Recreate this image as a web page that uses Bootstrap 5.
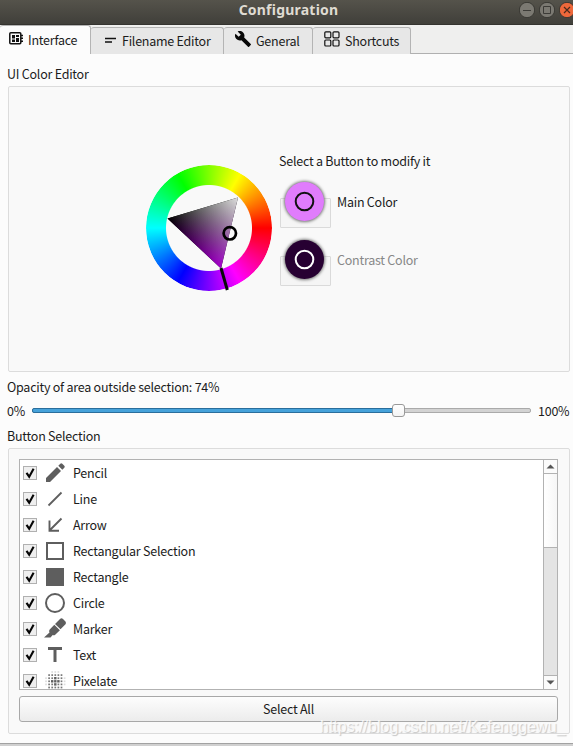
<!DOCTYPE html>
<html lang="en">
<head>
<meta charset="utf-8">
<title>Configuration</title>
<meta name="viewport" content="width=device-width, initial-scale=1">
<link href="https://cdn.jsdelivr.net/npm/bootstrap@5.3.0/dist/css/bootstrap.min.css" rel="stylesheet">
<style>
body{font-family:"Noto Sans CJK SC",sans-serif;font-size:12.5px;letter-spacing:-.24px;line-height:20px;color:#1c1c1c;background:#fcfcfc;height:746px;overflow:hidden}
.titlebar{height:25px;background:linear-gradient(#55534b,#403f3a);border-bottom:1px solid #34332f}
.titlebar h1{font:700 14px/20px "Noto Sans",sans-serif;letter-spacing:.22px;color:#dfdbd2;padding-left:4px}
.win-btns{top:2px;right:-2px;gap:4px}
.tabs{height:29px;background:#efefee;border-bottom:1px solid #b0b0b0}
.tab-item{height:27px;margin-top:2px;background:#e7e7e7;border:1px solid #b4b4b4;border-left-width:0;border-bottom:0;border-radius:3px 3px 0 0;white-space:nowrap}
.tab-item.current{height:29px;margin-top:0;background:#fcfcfc}
.tab-interface{width:91px}
.tab-filename{width:133px}
.tab-general{width:89px}
.tab-shortcuts{width:98px}
.tab-text{padding-left:5px}
.tab-interface svg{margin-top:-3px}
.tab-interface .tab-text{padding-left:4px}
.tab-filename svg{margin-left:13px;margin-top:-3px}
.tab-filename .tab-text{padding-left:6px}
.tab-general svg,.tab-shortcuts svg{margin-left:11px;margin-top:-4px}
.pane{padding:10px 3px 0 7px}
.group{border:1px solid #dcdcdc;border-radius:2px;background:#f9f9f9;margin-left:1px}
.editor{height:286px;margin-top:2px}
.wheel{width:126px;height:126px;margin:78px 0 0 137px}
.ring{width:126px;height:126px;border-radius:50%;background:conic-gradient(from 90deg,red,#f0f,#00f,#0ff,#0f0,#ff0,red);-webkit-mask:radial-gradient(circle,transparent 42.5px,#000 43.5px);mask:radial-gradient(circle,transparent 42.5px,#000 43.5px)}
.wheel svg{left:0;top:0;isolation:isolate}
.blend{mix-blend-mode:screen}
.picker{margin:64px 0 0 7px}
.pick-row{height:46px;margin-top:10px}
.pick-row.second{margin-top:12px}
.pick-label{margin:11px 0 0 6px}
.dimmed{color:#888}
.swatch-box{width:51px;height:30px;border:1px solid #dadada;border-radius:1px;background:#f5f5f5;margin:17px 0 0 1px}
.swatch{width:39px;height:39px;left:4px;top:-17px;border-radius:50%;box-shadow:0 0 3px 1px #777}
.swatch.main-color{background:#e07cfc}
.swatch.contrast-color{background:#270032}
.opacity-label{margin-top:5px}
.slider-row{margin-top:4px}
.zero{width:25px}
.hundred{width:32px;margin-left:7px}
.sel-label{margin-top:5px}
.slider{height:5px;margin-bottom:2px;background:#d3d3d3;border:1px solid #aaa;border-radius:2px}
.slider-fill{height:5px;top:-1px;left:-1px;background:#46a2da;border:1px solid #2a6e9c;border-radius:2px 0 0 2px}
.knob{width:13px;height:13px;top:-5px;background:linear-gradient(#fff,#f4f4f4);border:1px solid #999;border-radius:3px}
.selection{height:286px;padding:10px 11px 0 10px;margin-top:2px}
.tool-list{height:231px;border:1px solid #b2b2b2;background:#fff}
.tool{height:26px}
.tool-name{margin-left:4px}
.tick{width:14px;height:14px;border:1px solid #b0b0b0;background:#efefef;margin-left:3px}
.tool-icon{width:28px;margin-left:4px}
.scroll{width:14px;border-left:1px solid #b2b2b2;background:#e4e4e4}
.arrow-btn{height:13px;background:#fbfbfb}
.arrow-btn.down{height:14px;border-top:1px solid #b2b2b2}
.thumb{height:75px;background:linear-gradient(90deg,#fff,#f6f6f6);border-top:1px solid #b2b2b2;border-bottom:1px solid #b2b2b2}
.select-all{height:26px;margin-top:6px;padding:0;font-size:12.5px;letter-spacing:-.24px;line-height:24px;color:#1c1c1c;background:linear-gradient(#fdfdfd,#ececec);border:1px solid #a8a8a8;border-radius:3px}
.watermark{left:320px;top:717px;font:16px/20px "Liberation Sans",sans-serif;letter-spacing:0;color:rgba(255,255,255,.8);text-shadow:1px 1px 1px #c4c4c4;white-space:nowrap}
.win-edge{height:3px;border-top:1px solid #a2a2a2;background:#d0d0d0;margin-top:9px}
</style>
<script src="https://cdn.jsdelivr.net/npm/bootstrap@5.3.0/dist/js/bootstrap.bundle.min.js"></script>
</head>
<body>
<header class="titlebar position-relative text-center">
  <h1 class="m-0">Configuration</h1>
  <div class="win-btns position-absolute d-flex">
    <svg width="16" height="16"><circle cx="8" cy="8" r="7.7" fill="#7b7972" stroke="#393833"/><path d="M4 8.5h8" stroke="#3c3b37"/></svg>
    <svg width="16" height="16"><circle cx="8" cy="8" r="7.7" fill="#7b7972" stroke="#393833"/><path d="M4.5 4.5h7v7h-7z" fill="none" stroke="#3c3b37"/></svg>
    <svg width="16" height="16"><circle cx="8" cy="8" r="7.7" fill="#ee683b" stroke="#393833"/><path d="M5 5l6 6M11 5l-6 6" stroke="#4a2a1c" stroke-width="1.2"/></svg>
  </div>
</header>

<nav class="tabs d-flex">
  <div class="tab-item current tab-interface d-flex align-items-center">
    <svg class="ms-2" width="16" height="16" viewBox="0 0 16 16"><rect x="1.8" y="1.8" width="11" height="11" rx="1" fill="none" stroke="#111" stroke-width="1.5"/><path d="M13 4.5h2M13 7.3h2M13 10.2h2" stroke="#111" stroke-width="1.4"/><path d="M4 4h3v3.500H4zM8 4h3v2H8zM4 8.500h3V11H4zM8 7h3v4H8z" fill="#111"/></svg>
    <span class="tab-text">Interface</span>
  </div>
  <div class="tab-item tab-filename d-flex align-items-center">
    <svg width="12" height="8"><path d="M1 2.500h11M1 6h7" stroke="#111" stroke-width="1.7"/></svg>
    <span class="tab-text">Filename Editor</span>
  </div>
  <div class="tab-item tab-general d-flex align-items-center">
    <svg width="16" height="16" viewBox="1 1 22 22"><path d="M22.700 19l-9.100-9.100c.9-2.300.4-5-1.500-6.900-2-2-5-2.400-7.400-1.300L9 6 6 9 1.600 4.700C.4 7.100.9 10.100 2.900 12.100c1.900 1.900 4.600 2.400 6.900 1.500l9.100 9.100c.4.400 1 .4 1.400 0l2.300-2.300c.5-.4.5-1.100.1-1.400z" fill="#080808"/></svg>
    <span class="tab-text">General</span>
  </div>
  <div class="tab-item tab-shortcuts d-flex align-items-center">
    <svg width="16" height="16" fill="none" stroke="#111" stroke-width="1.2"><rect x=".8" y=".8" width="6" height="6" rx="1"/><rect x="9" y=".8" width="6" height="6" rx="1"/><rect x=".8" y="9" width="6" height="6" rx="1"/><rect x="9" y="9" width="6" height="6" rx="1"/></svg>
    <span class="tab-text">Shortcuts</span>
  </div>
</nav>

<main class="pane">
  <div>UI Color Editor</div>
  <section class="group editor d-flex">
    <div class="wheel position-relative">
      <div class="ring"></div>
      <svg class="position-absolute" width="126" height="128" viewBox="146 165 126 128">
        <defs>
          <linearGradient id="lightness" gradientUnits="userSpaceOnUse" x1="194.8" y1="243.3" x2="238" y2="197.5"><stop stop-color="#000"/><stop offset="1" stop-color="#dedede"/></linearGradient>
          <linearGradient id="purple" gradientUnits="userSpaceOnUse" x1="203.3" y1="207.7" x2="221" y2="268"><stop stop-color="#000"/><stop offset="1" stop-color="#a800d0"/></linearGradient>
        </defs>
        <path d="M167.500 218.500L238 197.500 221 268.500z" fill="url(#lightness)"/>
        <path class="blend" d="M167.500 218.500L238 197.500 221 268.500z" fill="url(#purple)"/>
        <path d="M221 268l6.300 22" stroke="#080808" stroke-width="3"/>
        <circle cx="229.8" cy="233.3" r="6.2" fill="none" stroke="#000" stroke-width="2.7"/>
      </svg>
    </div>
    <div class="picker">
      <div>Select a Button to modify it</div>
      <div class="pick-row d-flex">
        <div class="swatch-box position-relative flex-shrink-0"><div class="swatch main-color position-absolute"><svg width="39" height="39" class="d-block"><circle cx="19.5" cy="19.5" r="8.8" fill="none" stroke="#111" stroke-width="2"/></svg></div></div>
        <span class="pick-label">Main Color</span>
      </div>
      <div class="pick-row second d-flex">
        <div class="swatch-box position-relative flex-shrink-0"><div class="swatch contrast-color position-absolute"><svg width="39" height="39" class="d-block"><circle cx="19.5" cy="19.5" r="8.8" fill="none" stroke="#fff" stroke-width="2"/></svg></div></div>
        <span class="pick-label dimmed">Contrast Color</span>
      </div>
    </div>
  </section>

  <div class="opacity-label">Opacity of area outside selection: 74%</div>
  <div class="d-flex align-items-center slider-row">
    <span class="zero">0%</span>
    <div class="slider position-relative flex-grow-1"><div class="slider-fill position-absolute" style="width:74%"></div><div class="knob position-absolute" style="left:72.3%"></div></div>
    <span class="hundred">100%</span>
  </div>
  <div class="sel-label">Button Selection</div>

  <section class="group selection">
    <div class="tool-list d-flex overflow-hidden">
      <div class="flex-grow-1" id="tools"></div>
      <div class="scroll d-flex flex-column">
        <div class="arrow-btn"><svg class="d-block" width="13" height="13"><path d="M2.500 8.500h8l-4-4z" fill="#555"/></svg></div>
        <div class="thumb"></div>
        <div class="arrow-btn down mt-auto"><svg class="d-block" width="13" height="13"><path d="M2.500 4.500h8l-4 4z" fill="#555"/></svg></div>
      </div>
    </div>
    <button class="btn select-all w-100 d-block">Select All</button>
  </section>
</main>
<div class="win-edge"></div>
<div class="watermark position-absolute">https://blog.csdn.net/Kefenggewu_</div>

<script>
// Halftone grid: dots fade out from the centre, corners left empty.
let dots = '';
for (let r = 0; r < 7; r++) for (let c = 0; c < 7; c++) {
  const dy = Math.abs(r - 3), dx = Math.abs(c - 3), edge = Math.max(dx, dy);
  if (edge === 3 && dx + dy > 4) continue;
  const size = dx + dy < 2 ? 2.4 : 1.7;
  const shade = edge === 3 ? '#ddd' : dx + dy < 2 ? '#5e5e5e' : '#777';
  dots += `<rect x="${(5 + c * 3.1 - size / 2).toFixed(2)}" y="${(5 + r * 3.1 - size / 2).toFixed(2)}" width="${size}" height="${size}" fill="${shade}"/>`;
}
const tools = [
  ['Pencil', '<path d="M5 23v-4L16 8l4 4L9 23zM17.300 6.700l2-2q1-1 2 0l2 2q1 1 0 2l-2 2z"/>'],
  ['Line', '<path d="M7.500 20.500l13-13" stroke="#5e5e5e" stroke-width="1.8"/>'],
  ['Arrow', '<path d="M20.500 7.500l-12 12M8.500 9.500v10.200h9.500" fill="none" stroke="#5e5e5e" stroke-width="1.9"/>'],
  ['Rectangular Selection', '<path d="M6 6h16v16H6z" fill="none" stroke="#5e5e5e" stroke-width="2"/>'],
  ['Rectangle', '<path d="M5 5h18v18H5z"/>'],
  ['Circle', '<circle cx="14" cy="14" r="9" fill="none" stroke="#5e5e5e" stroke-width="2"/>'],
  ['Marker', '<path d="M14 9l5-5q1.500-1.300 3 0l2.500 2.500q1 1.500 0 2.800l-5 5zM13.300 9.800l5.600 5.400-4.700 4.600q-1.200 1-2.500.2L9.500 22.500H3l5.500-5q-1-1.500.2-3z"/>'],
  ['Text', '<path d="M7 6h14v3h-5.500v12h-3V9H7z"/>'],
  ['Pixelate', dots]
];
document.getElementById('tools').innerHTML = tools.map(([name, icon]) =>
  `<div class="tool d-flex align-items-center"><span class="tick d-flex"><svg width="12" height="12"><path d="M2.500 5.800l2.700 3.900L9.600 1.700" fill="none" stroke="#050505" stroke-width="2.1"/></svg></span><svg class="tool-icon" height="28" viewBox="0 0 28 28" fill="#5e5e5e">${icon}</svg><span class="tool-name">${name}</span></div>`).join('');
</script>
</body>
</html>
